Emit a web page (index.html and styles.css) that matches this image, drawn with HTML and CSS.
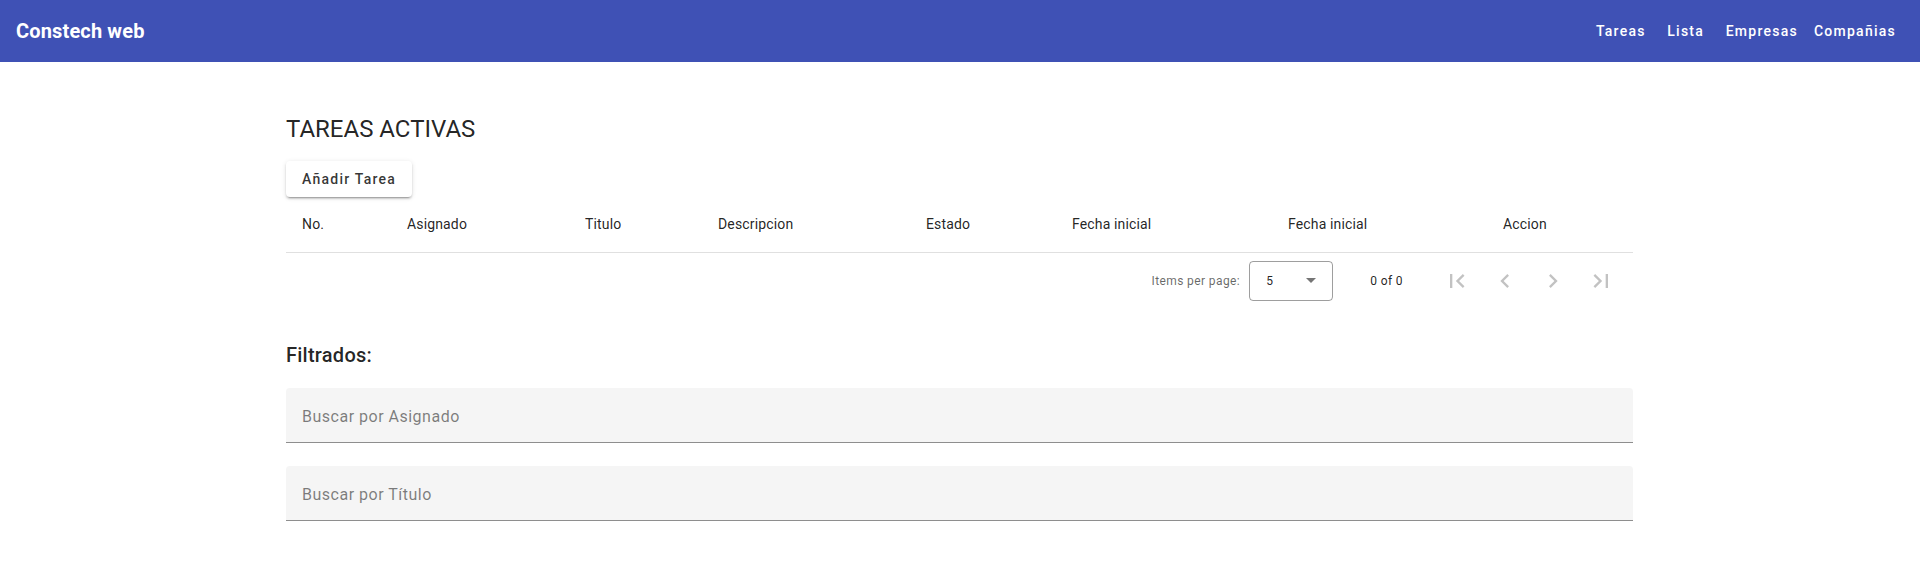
FILE: index.html
```html
<!DOCTYPE html>
<html lang="es">
<head>
<meta charset="utf-8">
<title>Constech web</title>
<link rel="stylesheet" href="styles.css">
</head>
<body>
<header class="toolbar">
  <span class="brand">Constech web</span>
  <span class="spacer"></span>
  <nav class="nav">
    <a class="nav-btn">Tareas</a>
    <a class="nav-btn">Lista</a>
    <a class="nav-btn">Empresas</a>
    <a class="nav-btn">Compañias</a>
  </nav>
</header>

<main class="container">
  <h1 class="page-title">TAREAS ACTIVAS</h1>
  <button class="raised-btn">Añadir Tarea</button>

  <table class="tasks">
    <colgroup>
      <col class="c1"><col class="c2"><col class="c3"><col class="c4">
      <col class="c5"><col class="c6"><col class="c7"><col class="c8">
    </colgroup>
    <thead>
      <tr>
        <th>No.</th>
        <th>Asignado</th>
        <th>Titulo</th>
        <th>Descripcion</th>
        <th>Estado</th>
        <th>Fecha inicial</th>
        <th>Fecha inicial</th>
        <th>Accion</th>
      </tr>
    </thead>
  </table>

  <div class="paginator">
    <span class="pg-label">Items per page:</span>
    <div class="pg-select">
      <span class="pg-value">5</span>
      <span class="pg-arrow"></span>
    </div>
    <span class="pg-range">0 of 0</span>
    <div class="pg-actions">
      <span class="pg-btn"><svg viewBox="0 0 24 24"><path d="M18.41 16.59L13.82 12l4.59-4.59L17 6l-6 6 6 6zM6 6h2v12H6z"/></svg></span>
      <span class="pg-btn"><svg viewBox="0 0 24 24"><path d="M15.41 7.41L14 6l-6 6 6 6 1.41-1.41L10.83 12z"/></svg></span>
      <span class="pg-btn"><svg viewBox="0 0 24 24"><path d="M10 6L8.59 7.41 13.17 12l-4.58 4.59L10 18l6-6z"/></svg></span>
      <span class="pg-btn"><svg viewBox="0 0 24 24"><path d="M5.59 7.41L10.18 12l-4.59 4.59L7 18l6-6-6-6zM16 6h2v12h-2z"/></svg></span>
    </div>
  </div>

  <h2 class="section-title">Filtrados:</h2>
  <div class="field"><input class="field-input" type="text" placeholder="Buscar por Asignado"></div>
  <div class="field"><input class="field-input" type="text" placeholder="Buscar por Título"></div>
</main>
</body>
</html>
```

FILE: styles.css
```css
* { box-sizing: border-box; }

body {
  margin: 0;
  font-family: Roboto, "Helvetica Neue", sans-serif;
  color: rgba(0, 0, 0, 0.87);
  background: #fff;
}

.toolbar {
  display: flex;
  align-items: center;
  height: 62px;
  padding: 0 16px;
  background: #3f51b5;
  color: #fff;
}

.brand {
  font-size: 20px;
  font-weight: 700;
  letter-spacing: 0.15px;
}

.spacer { flex: 1; }

.nav { display: flex; }

.nav-btn {
  display: inline-flex;
  align-items: center;
  justify-content: center;
  min-width: 64px;
  height: 36px;
  padding: 0 8px;
  font-size: 14px;
  font-weight: 500;
  letter-spacing: 1.25px;
  color: #fff;
  cursor: pointer;
}

.container {
  width: 1347px;
  margin: 0 0 0 286px;
}

.page-title {
  margin: 51px 0 16px;
  font-size: 24px;
  line-height: 32px;
  font-weight: 400;
}

.raised-btn {
  display: block;
  height: 36px;
  padding: 0 16px;
  border: 0;
  border-radius: 4px;
  background: #fff;
  font-family: Roboto, sans-serif;
  font-size: 14px;
  font-weight: 500;
  letter-spacing: 1.25px;
  color: rgba(0, 0, 0, 0.8);
  box-shadow: 0 3px 1px -2px rgba(0,0,0,.2), 0 2px 2px 0 rgba(0,0,0,.14), 0 1px 5px 0 rgba(0,0,0,.12);
}

.tasks {
  width: 100%;
  border-collapse: collapse;
  table-layout: fixed;
}
.c1 { width: 121px; }
.c2 { width: 178px; }
.c3 { width: 133px; }
.c4 { width: 208px; }
.c5 { width: 146px; }
.c6 { width: 216px; }
.c7 { width: 215px; }
.c8 { width: 130px; }

.tasks th {
  height: 55px;
  padding: 0;
  text-align: left;
  font-size: 14px;
  font-weight: 400;
  letter-spacing: 0.15px;
  color: rgba(0, 0, 0, 0.87);
  border-bottom: 1px solid #e0e0e0;
}
.tasks th:first-child { padding-left: 16px; }

.paginator {
  display: flex;
  align-items: center;
  justify-content: flex-end;
  height: 56px;
  padding: 0 8px;
  font-size: 12px;
  letter-spacing: 0.4px;
  color: rgba(0, 0, 0, 0.6);
}

.pg-label { margin-right: 9px; }

.pg-select {
  display: flex;
  align-items: center;
  justify-content: space-between;
  width: 84px;
  height: 40px;
  padding: 0 16px;
  border: 1px solid rgba(0, 0, 0, 0.38);
  border-radius: 4px;
  color: rgba(0, 0, 0, 0.87);
}

.pg-arrow {
  width: 0;
  height: 0;
  border-left: 5px solid transparent;
  border-right: 5px solid transparent;
  border-top: 5px solid rgba(0, 0, 0, 0.54);
}

.pg-range { margin: 0 30px 0 37px; color: rgba(0, 0, 0, 0.87); }

.pg-actions { display: flex; }

.pg-btn {
  display: flex;
  align-items: center;
  justify-content: center;
  width: 48px;
  height: 48px;
}
.pg-btn svg {
  width: 28px;
  height: 28px;
  fill: rgba(0, 0, 0, 0.24);
}

.section-title {
  margin: 30px 0 17px;
  font-size: 20px;
  line-height: 32px;
  font-weight: 500;
  letter-spacing: 0.25px;
}

.field {
  display: flex;
  align-items: center;
  height: 55px;
  margin-bottom: 23px;
  padding: 3px 16px 0;
  background: #f5f5f5;
  border-radius: 4px 4px 0 0;
  border-bottom: 1px solid rgba(0, 0, 0, 0.42);
}

.field-input {
  width: 100%;
  border: 0;
  outline: none;
  padding: 0;
  background: transparent;
  font-family: Roboto, sans-serif;
  font-size: 16px;
  letter-spacing: 0.5px;
  color: rgba(0, 0, 0, 0.87);
}
.field-input::placeholder { color: rgba(0, 0, 0, 0.5); }
```
